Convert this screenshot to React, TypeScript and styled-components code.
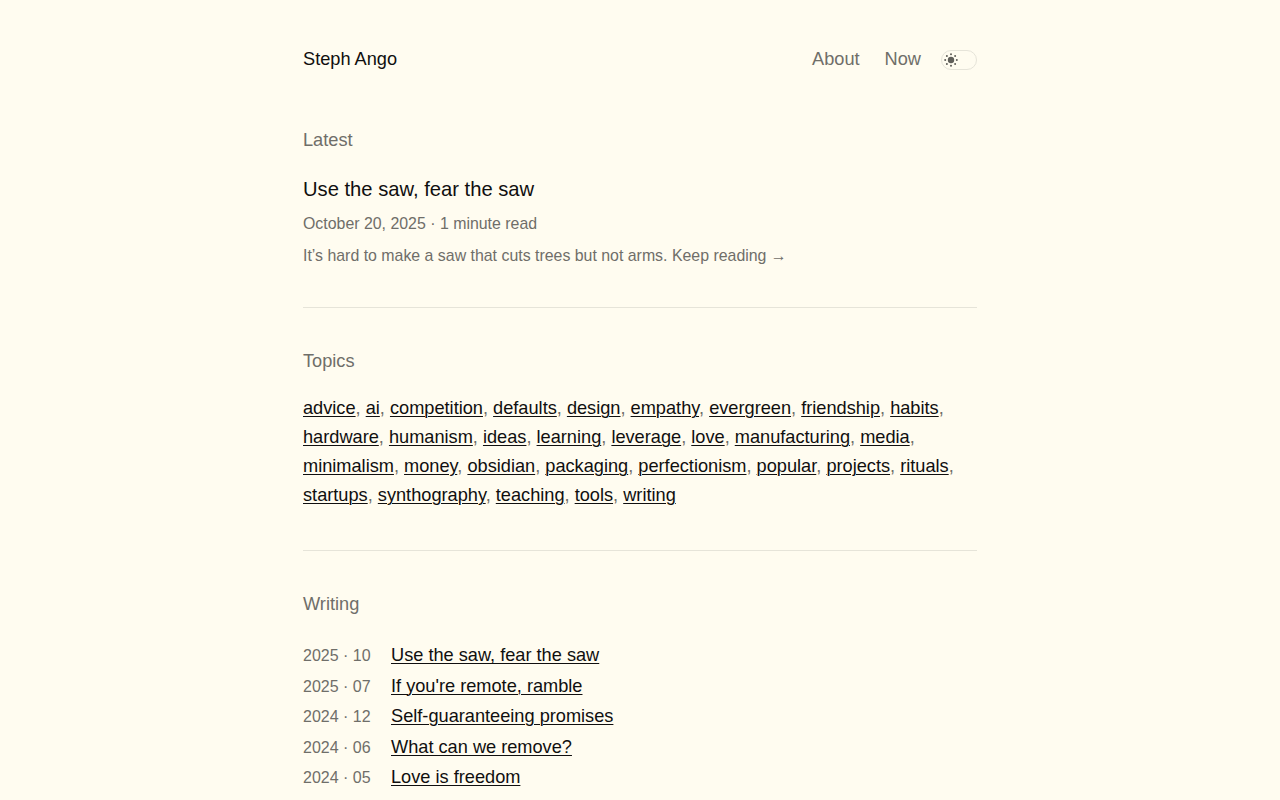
import React from "react";
import styled, { createGlobalStyle } from "styled-components";

const Global = createGlobalStyle`
  html, body { margin: 0; padding: 0; background: #fffcf0; }
  body {
    font-family: "Liberation Sans", Arial, sans-serif;
    color: #100f0f;
    -webkit-font-smoothing: antialiased;
  }
  * { box-sizing: border-box; }
`;

const Page = styled.div`
  width: 674px;
  margin: 0 auto;
  padding-top: 46px;
  padding-bottom: 40px;
`;

const Header = styled.header`
  display: flex;
  align-items: center;
  justify-content: space-between;
  height: 27px;
  margin-bottom: 54px;
`;

const Brand = styled.a`
  font-size: 18.2px;
  line-height: 27px;
  color: #100f0f;
  text-decoration: none;
`;

const Nav = styled.nav`
  display: flex;
  align-items: center;
`;

const NavLink = styled.a<{ $gap: number }>`
  font-size: 18.2px;
  line-height: 27px;
  color: #6f6e69;
  text-decoration: none;
  margin-right: ${(p) => p.$gap}px;
`;

const Toggle = styled.button`
  display: flex;
  align-items: center;
  width: 36px;
  height: 20px;
  padding: 0 0 0 2px;
  border: 1px solid #e6e4d9;
  border-radius: 10px;
  background: transparent;
  cursor: pointer;
`;

const SectionLabel = styled.h2`
  margin: 0;
  font-size: 18.2px;
  font-weight: 400;
  line-height: 27px;
  color: #6f6e69;
`;

const LatestTitle = styled.a`
  display: block;
  margin-top: 20px;
  font-size: 20.2px;
  line-height: 30px;
  color: #100f0f;
  text-decoration: none;
`;

const Meta = styled.div`
  margin-top: 8px;
  font-size: 15.9px;
  line-height: 24px;
  color: #6f6e69;
`;

const Excerpt = styled.p`
  margin: 8px 0 0;
  font-size: 15.9px;
  line-height: 24px;
  color: #6f6e69;
`;

const Rule = styled.hr<{ $top: number; $bottom: number }>`
  border: none;
  border-top: 1px solid #e6e4d9;
  margin: ${(p) => `${p.$top}px 0 ${p.$bottom}px`};
`;

const TopicList = styled.div`
  margin-top: 19px;
  font-size: 18.2px;
  line-height: 29px;
  color: #6f6e69;
`;

const TopicLink = styled.a`
  color: #100f0f;
  text-decoration: underline;
  text-underline-offset: 2px;
  text-decoration-thickness: 1px;
`;

const WritingList = styled.ul`
  list-style: none;
  margin: 22px 0 0;
  padding: 0;
`;

const WritingItem = styled.li`
  display: flex;
  align-items: baseline;
  height: 30.5px;
  line-height: 30.5px;
`;

const WDate = styled.span`
  width: 88px;
  flex: none;
  font-size: 16px;
  color: #6f6e69;
`;

const WLink = styled.a`
  font-size: 18.2px;
  color: #100f0f;
  text-decoration: underline;
  text-underline-offset: 2px;
  text-decoration-thickness: 1px;
`;

const Sun = () => (
  <svg width="14" height="14" viewBox="0 0 14 14" fill="#5f5e59">
    <circle cx="7" cy="7" r="3.2" />
    <circle cx="7" cy="1.2" r="1" />
    <circle cx="7" cy="12.8" r="1" />
    <circle cx="1.2" cy="7" r="1" />
    <circle cx="12.8" cy="7" r="1" />
    <circle cx="2.9" cy="2.9" r="1" />
    <circle cx="11.1" cy="2.9" r="1" />
    <circle cx="2.9" cy="11.1" r="1" />
    <circle cx="11.1" cy="11.1" r="1" />
  </svg>
);

const topics = [
  "advice", "ai", "competition", "defaults", "design", "empathy", "evergreen", "friendship", "habits",
  "hardware", "humanism", "ideas", "learning", "leverage", "love", "manufacturing", "media",
  "minimalism", "money", "obsidian", "packaging", "perfectionism", "popular", "projects", "rituals",
  "startups", "synthography", "teaching", "tools", "writing",
];

const writing = [
  ["2025 · 10", "Use the saw, fear the saw"],
  ["2025 · 07", "If you're remote, ramble"],
  ["2024 · 12", "Self-guaranteeing promises"],
  ["2024 · 06", "What can we remove?"],
  ["2024 · 05", "Love is freedom"],
];

export default function App() {
  return (
    <>
      <Global />
      <Page>
        <Header>
          <Brand href="#">Steph Ango</Brand>
          <Nav>
            <NavLink href="#" $gap={25}>About</NavLink>
            <NavLink href="#" $gap={20}>Now</NavLink>
            <Toggle aria-label="Toggle theme"><Sun /></Toggle>
          </Nav>
        </Header>

        <section>
          <SectionLabel>Latest</SectionLabel>
          <LatestTitle href="#">Use the saw, fear the saw</LatestTitle>
          <Meta>October 20, 2025 · 1 minute read</Meta>
          <Excerpt>It’s hard to make a saw that cuts trees but not arms. Keep reading →</Excerpt>
        </section>

        <Rule $top={39} $bottom={40} />

        <section>
          <SectionLabel>Topics</SectionLabel>
          <TopicList>
            {topics.map((t, i) => (
              <React.Fragment key={t}>
                <TopicLink href="#">{t}</TopicLink>
                {i < topics.length - 1 ? ", " : ""}
              </React.Fragment>
            ))}
          </TopicList>
        </section>

        <Rule $top={40} $bottom={40} />

        <section>
          <SectionLabel>Writing</SectionLabel>
          <WritingList>
            {writing.map(([d, t]) => (
              <WritingItem key={t}>
                <WDate>{d}</WDate>
                <WLink href="#">{t}</WLink>
              </WritingItem>
            ))}
          </WritingList>
        </section>
      </Page>
    </>
  );
}
